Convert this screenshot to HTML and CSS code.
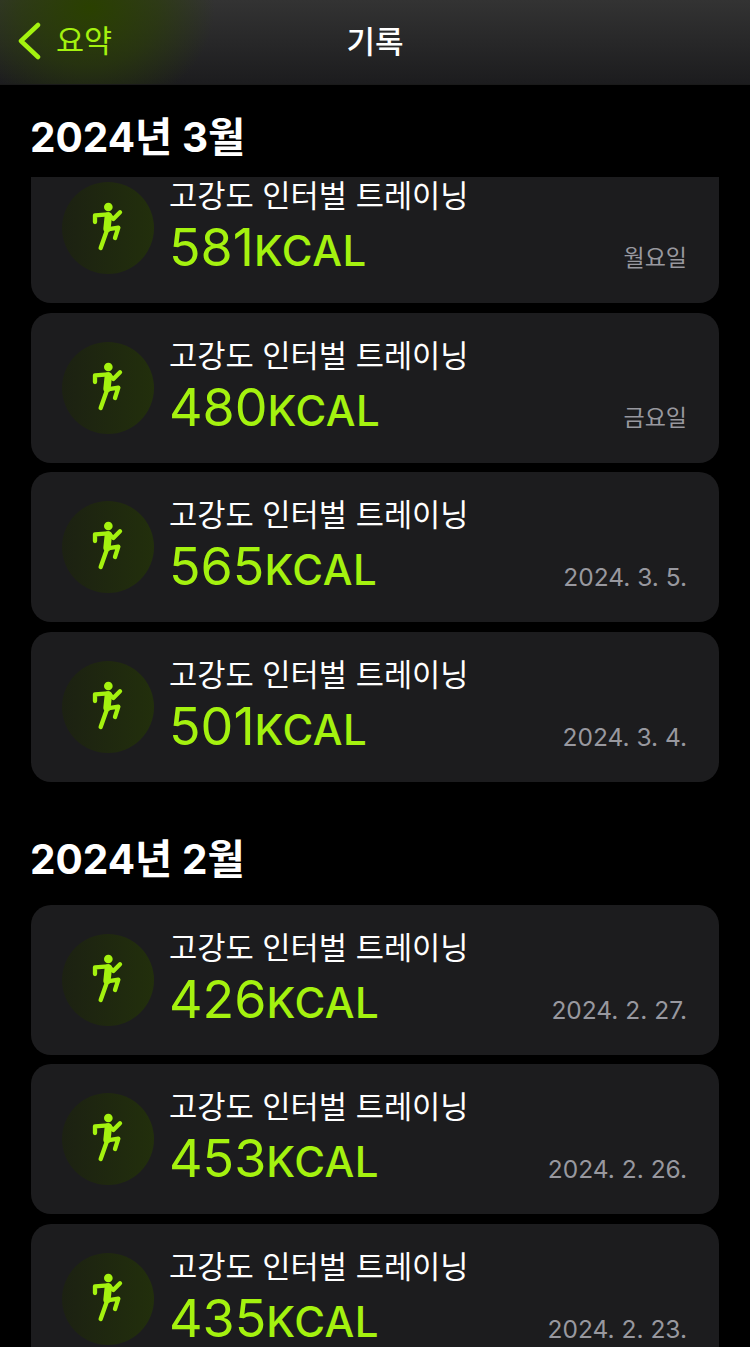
FILE: index.html
```html
<!DOCTYPE html>
<html lang="ko">
<head>
    <meta charset="UTF-8">
    <meta name="viewport" content="width=device-width, initial-scale=1.0">
    <title>기록</title>
    <link rel="stylesheet" href="styles.css">
</head>
<body>

    <svg class="defs" width="0" height="0" aria-hidden="true">
        <symbol id="runner" viewBox="96 96 276 276">
            <circle cx="235" cy="171" r="13" fill="currentColor"/>
            <path d="M195 216 L195 196 L235 193 L250 207 L270 187 M232 238 L265 233 L255 264 M232 238 L212 294" fill="none" stroke="currentColor" stroke-width="13" stroke-linecap="round" stroke-linejoin="round"/>
            <path d="M235 198 L231 236" fill="none" stroke="currentColor" stroke-width="22" stroke-linecap="round"/>
        </symbol>
    </svg>

    <div class="page">

        <header class="navbar">
            <div class="nav-back">
                <svg class="chevron" width="24" height="40" viewBox="0 0 24 40">
                    <path d="M21 4 L4 20 L21 36" fill="none" stroke="currentColor" stroke-width="4.5" stroke-linecap="round" stroke-linejoin="round"/>
                </svg>
                <span>요약</span>
            </div>
            <div class="nav-title">기록</div>
        </header>

        <!-- 3월 -->
        <h2 class="month">2024년 3월</h2>
        <div class="clip">
            <div class="list list-scrolled">
                <div class="card">
                    <div class="badge"><svg><use href="#runner"/></svg></div>
                    <div class="info">
                        <div class="name">고강도 인터벌 트레이닝</div>
                        <div class="kcal">581<span class="unit">KCAL</span></div>
                    </div>
                    <div class="date date-day">월요일</div>
                </div>
                <div class="card">
                    <div class="badge"><svg><use href="#runner"/></svg></div>
                    <div class="info">
                        <div class="name">고강도 인터벌 트레이닝</div>
                        <div class="kcal">480<span class="unit">KCAL</span></div>
                    </div>
                    <div class="date date-day">금요일</div>
                </div>
                <div class="card">
                    <div class="badge"><svg><use href="#runner"/></svg></div>
                    <div class="info">
                        <div class="name">고강도 인터벌 트레이닝</div>
                        <div class="kcal">565<span class="unit">KCAL</span></div>
                    </div>
                    <div class="date">2024. 3. 5.</div>
                </div>
                <div class="card">
                    <div class="badge"><svg><use href="#runner"/></svg></div>
                    <div class="info">
                        <div class="name">고강도 인터벌 트레이닝</div>
                        <div class="kcal">501<span class="unit">KCAL</span></div>
                    </div>
                    <div class="date">2024. 3. 4.</div>
                </div>
            </div>
        </div>

        <!-- 2월 -->
        <h2 class="month month-next">2024년 2월</h2>
        <div class="list">
            <div class="card">
                <div class="badge"><svg><use href="#runner"/></svg></div>
                <div class="info">
                    <div class="name">고강도 인터벌 트레이닝</div>
                    <div class="kcal">426<span class="unit">KCAL</span></div>
                </div>
                <div class="date">2024. 2. 27.</div>
            </div>
            <div class="card">
                <div class="badge"><svg><use href="#runner"/></svg></div>
                <div class="info">
                    <div class="name">고강도 인터벌 트레이닝</div>
                    <div class="kcal">453<span class="unit">KCAL</span></div>
                </div>
                <div class="date">2024. 2. 26.</div>
            </div>
            <div class="card">
                <div class="badge"><svg><use href="#runner"/></svg></div>
                <div class="info">
                    <div class="name">고강도 인터벌 트레이닝</div>
                    <div class="kcal">435<span class="unit">KCAL</span></div>
                </div>
                <div class="date">2024. 2. 23.</div>
            </div>
        </div>

    </div>

</body>
</html>
```

FILE: styles.css
```css
* {
    box-sizing: border-box;
}
html, body {
    margin: 0;
    height: 100%;
    background-color: #000;
}
body {
    font-family: Inter, "Noto Sans CJK KR", sans-serif;
    color: #fff;
    overflow: hidden;
}
.defs {
    position: absolute;
}
.page {
    height: 1347px;
    overflow: hidden;
}

.navbar {
    height: 85px;
    display: flex;
    align-items: center;
    justify-content: center;
    position: relative;
    border-bottom: 1px solid #1a1a1a;
    background:
        radial-gradient(ellipse 125px 105px at 90px 8px, rgba(42, 64, 0, 1), rgba(42, 64, 0, 0.55) 55%, rgba(42, 64, 0, 0) 100%),
        linear-gradient(to bottom, #333 0%, #1c1c1e 100%);
}
.nav-back {
    position: absolute;
    left: 17px;
    top: 21px;
    display: flex;
    align-items: center;
    gap: 15px;
    color: #a4f20f;
    font-size: 30.5px;
    line-height: 40px;
}
.chevron {
    display: block;
}
.nav-title {
    font-size: 31px;
    font-weight: 500;
    line-height: 40px;
}

.month {
    margin: 0;
    padding: 6px 0 0 30px;
    height: 92px;
    display: flex;
    align-items: center;
    font-size: 40.5px;
    font-weight: 700;
}
.month-next {
    height: 122.9px;
    padding-top: 26px;
}

.clip {
    height: 605px;
    overflow: hidden;
}
.list {
    display: flex;
    flex-direction: column;
    gap: 9.5px;
    padding: 0 31px;
}
.list-scrolled {
    margin-top: -23.6px;
}

.card {
    height: 150px;
    flex-shrink: 0;
    display: flex;
    align-items: center;
    position: relative;
    padding-left: 31px;
    background-color: #1c1c1e;
    border-radius: 20px;
}
.badge {
    width: 92px;
    height: 92px;
    flex-shrink: 0;
    border-radius: 50%;
    background: linear-gradient(to right, #1c2112, #222f0c);
    color: #a4f20f;
}
.badge svg {
    display: block;
    width: 92px;
    height: 92px;
}
.info {
    margin-left: 15px;
    align-self: flex-start;
    padding-top: 21px;
}
.name {
    font-size: 30.7px;
    line-height: 44px;
}
.kcal {
    font-size: 52px;
    line-height: 56px;
    margin-top: 2px;
    color: #a4f20f;
}
.unit {
    font-size: 42px;
    font-weight: 500;
    letter-spacing: 0.5px;
}
.date {
    position: absolute;
    right: 32px;
    bottom: 30px;
    font-size: 24.5px;
    line-height: 30px;
    color: #98989f;
}
.date-day {
    font-size: 23px;
}
```
